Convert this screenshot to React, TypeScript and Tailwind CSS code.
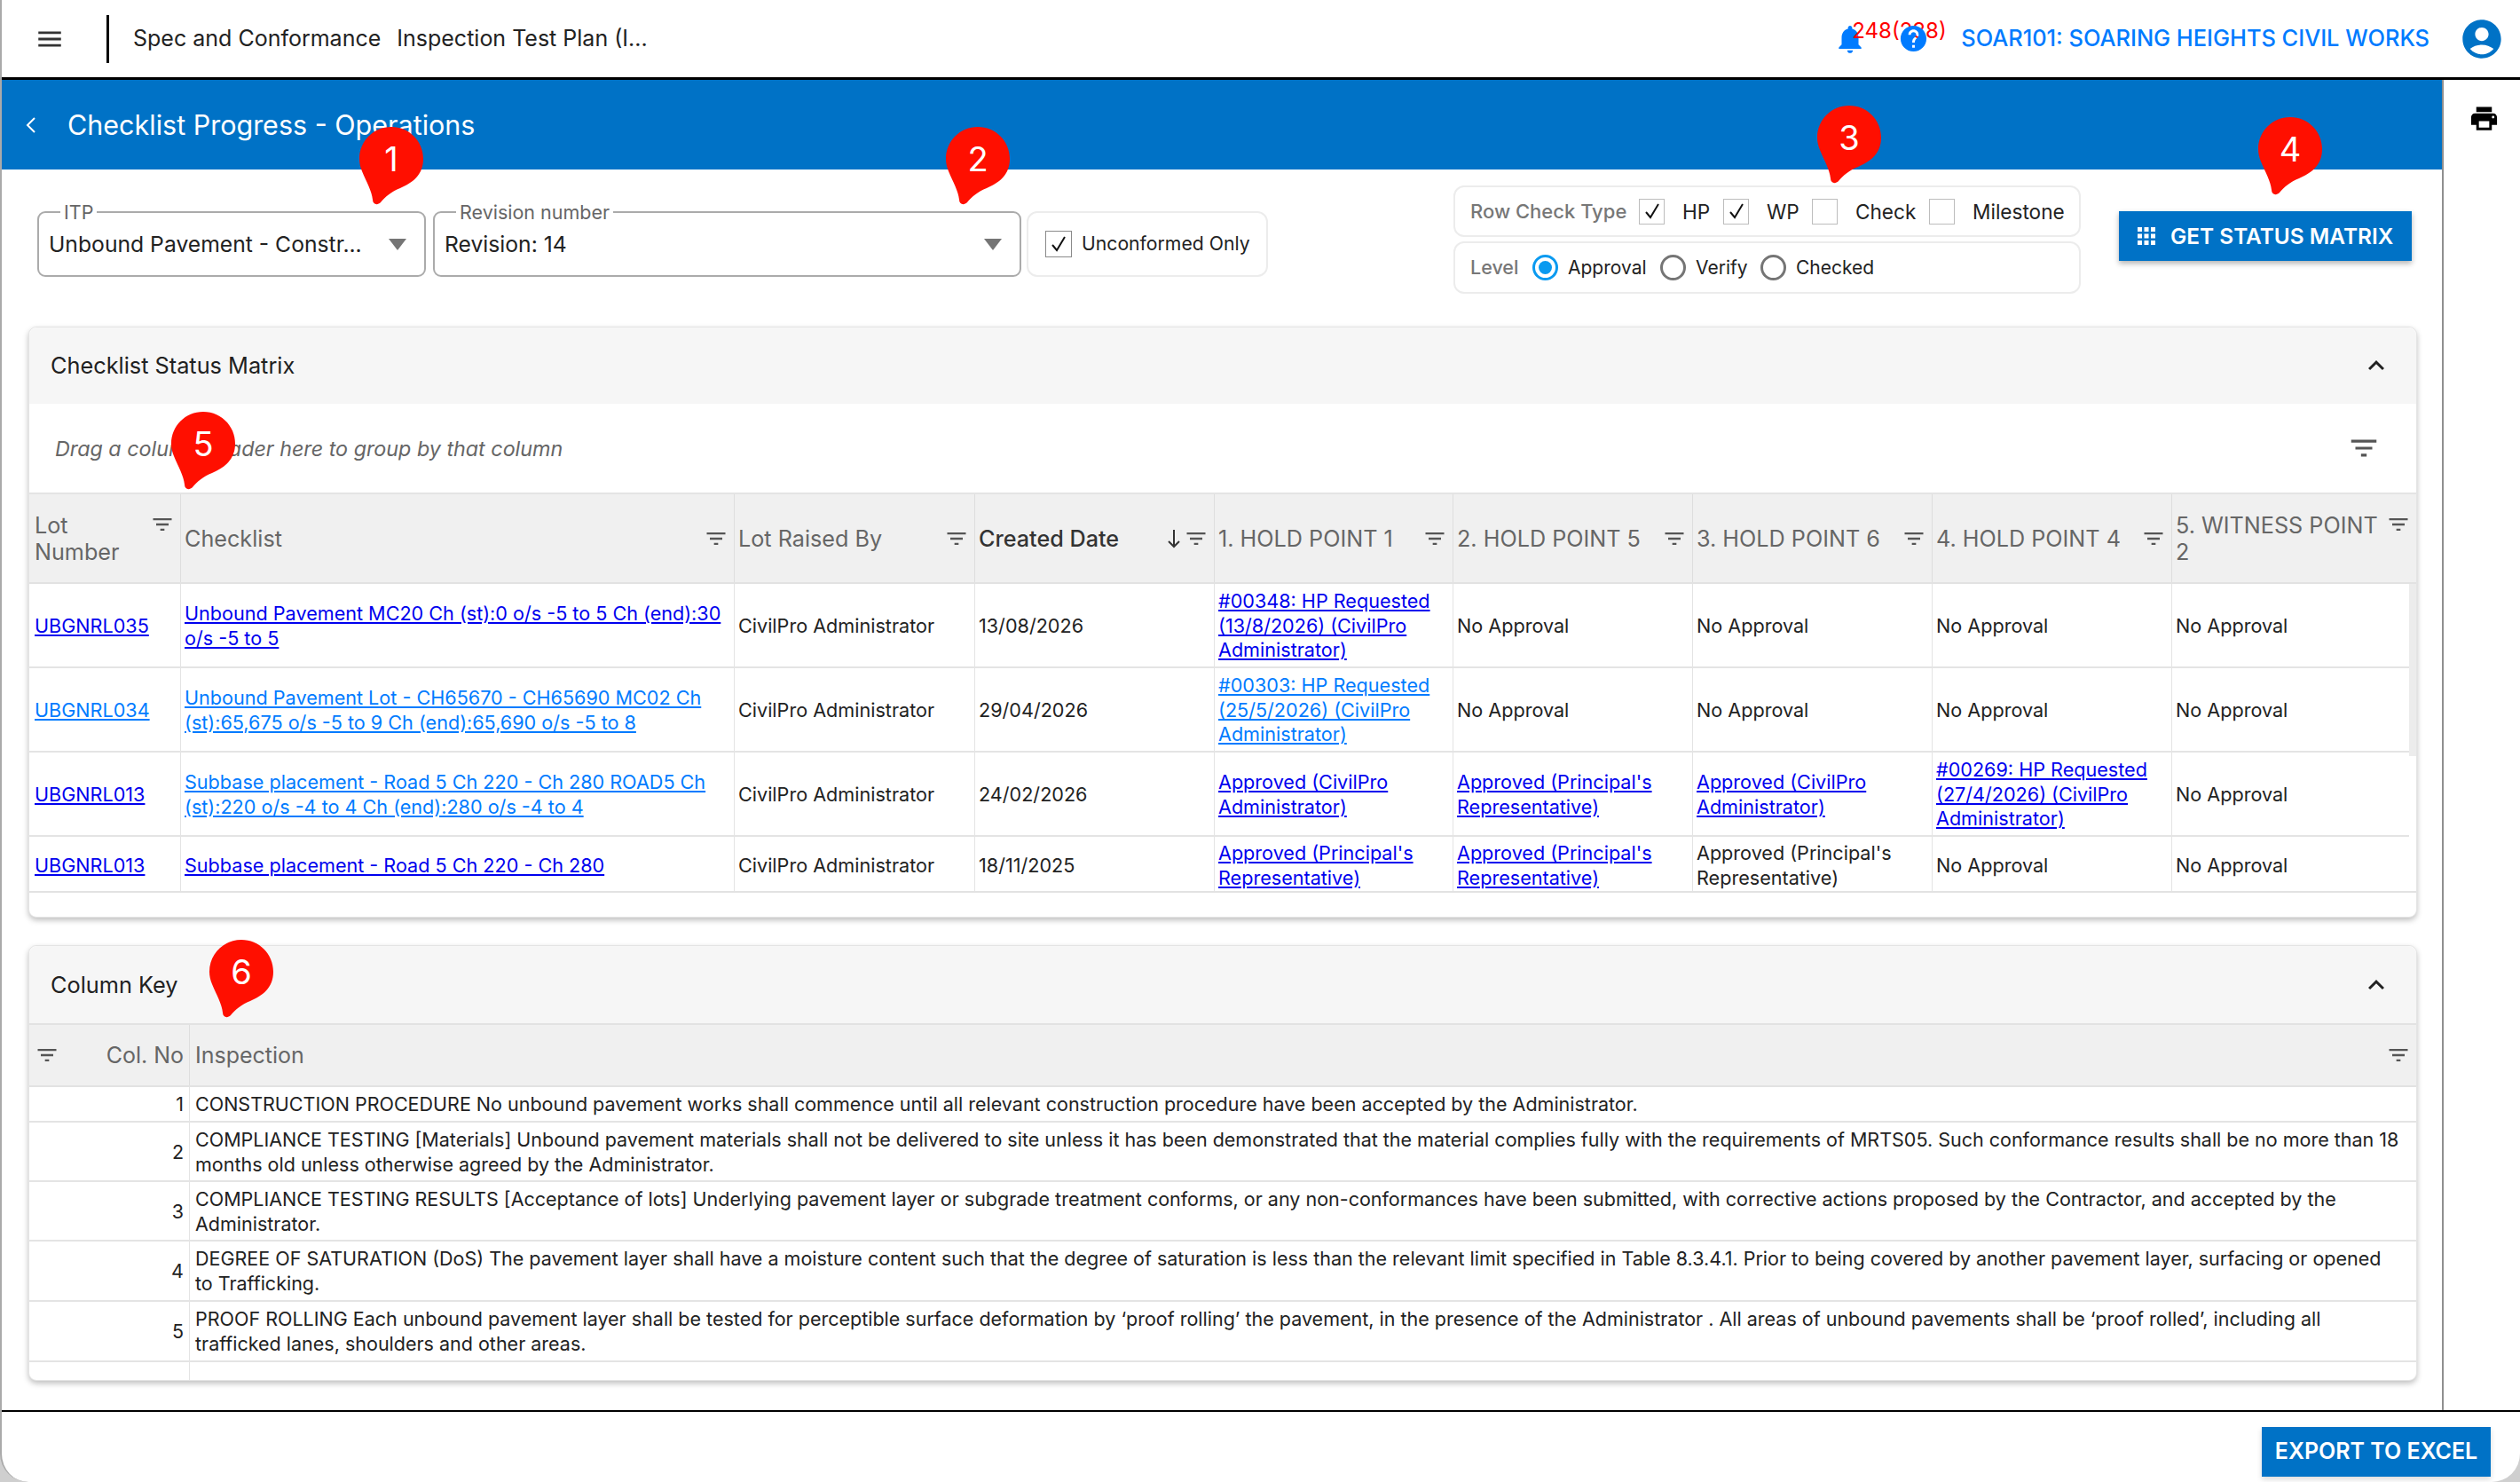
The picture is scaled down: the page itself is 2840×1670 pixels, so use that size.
import type { ReactNode } from "react";

const FILTER = "M10 18h4v-2h-4v2zM3 6v2h18V6H3zm3 7h12v-2H6v2z";

function Icon({ d, size, className }: { d: string; size: number; className?: string }) {
  return (
    <svg width={size} height={size} viewBox="0 0 24 24" fill="currentColor" className={className}>
      <path d={d} />
    </svg>
  );
}

function FilterIcon({ size = 28, className = "" }: { size?: number; className?: string }) {
  return <Icon d={FILTER} size={size} className={`shrink-0 text-[#555] ${className}`} />;
}

function Marker({ n, className }: { n: number; className: string }) {
  return (
    <div className={`absolute z-20 w-[72px] h-[88px] ${className}`}>
      <svg width="72" height="88" viewBox="0 0 72 88" className="absolute inset-0">
        <path
          d="M36 0C56 0 72 16 72 36C72 54 60 63 46 69C36 73 29 79 24 85C20 89 15 87 15 82C14 72 8 62 3 50C1 45 0 41 0 36C0 16 16 0 36 0Z"
          fill="#ff0f00"
        />
      </svg>
      <span className="absolute left-0 top-0 w-[72px] h-[72px] flex items-center justify-center text-white text-[38px]">{n}</span>
    </div>
  );
}

function Box({ checked }: { checked?: boolean }) {
  return (
    <span className="w-[29px] h-[29px] border border-[#bdbdbd] flex items-center justify-center shrink-0">
      {checked && (
        <svg width="20" height="20" viewBox="0 0 20 20" fill="none" stroke="#111" strokeWidth="2">
          <path d="M3 11l5 6L17 2" />
        </svg>
      )}
    </span>
  );
}

function Radio({ checked }: { checked?: boolean }) {
  return (
    <span
      className={`w-[29px] h-[29px] rounded-full border-[3px] flex items-center justify-center shrink-0 ${
        checked ? "border-[#0a9af0]" : "border-[#757575]"
      }`}
    >
      {checked && <span className="w-[15px] h-[15px] rounded-full bg-[#0a9af0]" />}
    </span>
  );
}

function SelectField({ label, value, width, labelLeft }: { label: string; value: string; width: string; labelLeft: string }) {
  return (
    <div className={`relative h-[74px] border-2 border-[#ababab] rounded-[9px] flex items-center pl-[11px] pr-[20px] ${width}`}>
      <span className={`absolute -top-[13px] bg-white px-[4px] text-[21.500px] leading-[24px] text-[#666] ${labelLeft}`}>{label}</span>
      <span className="flex-1 pt-[2px] text-[24.700px] text-[#222]">{value}</span>
      <span className="w-0 h-0 border-x-[10px] border-x-transparent border-t-[13px] border-t-[#757575]" />
    </div>
  );
}

function CardHeader({ title, height }: { title: string; height: string }) {
  return (
    <div className={`flex items-center justify-between bg-[#f6f6f6] pl-[24px] pr-[27px] rounded-t-[9px] ${height}`}>
      <span className="text-[25.300px] text-[#212121]">{title}</span>
      <Icon d="M12 8l-6 6 1.41 1.41L12 10.83l4.59 4.58L18 14z" size={36} className="text-[#222]" />
    </div>
  );
}

const cols = "grid grid-cols-[170px_624px_271px_270px_269px_270px_270px_270px_1fr]";

type Head = { label: ReactNode; top?: boolean; dark?: boolean; sort?: boolean };

const heads: Head[] = [
  { label: <>Lot<br />Number</>, top: true },
  { label: "Checklist" },
  { label: "Lot Raised By" },
  { label: "Created Date", dark: true, sort: true },
  { label: "1. HOLD POINT 1" },
  { label: "2. HOLD POINT 5" },
  { label: "3. HOLD POINT 6" },
  { label: "4. HOLD POINT 4" },
  { label: <>5. WITNESS POINT<br />2</>, top: true },
];

const dk = "text-[#0000ee]";
const lt = "text-[#007bff]";

type Cell = string | { link: string; color: string };
const L = (link: string, color = dk): Cell => ({ link, color });

const rows: { h: string; pad: string; cells: Cell[] }[] = [
  {
    h: "h-[95px]",
    pad: "pt-[2px]",
    cells: [
      L("UBGNRL035"),
      L("Unbound Pavement MC20 Ch (st):0 o/s -5 to 5 Ch (end):30 o/s -5 to 5"),
      "CivilPro Administrator",
      "13/08/2026",
      L("#00348: HP Requested (13/8/2026) (CivilPro Administrator)"),
      "No Approval",
      "No Approval",
      "No Approval",
      "No Approval",
    ],
  },
  {
    h: "h-[95px]",
    pad: "pt-[2px]",
    cells: [
      L("UBGNRL034", lt),
      L("Unbound Pavement Lot - CH65670 - CH65690 MC02 Ch (st):65,675 o/s -5 to 9 Ch (end):65,690 o/s -5 to 8", lt),
      "CivilPro Administrator",
      "29/04/2026",
      L("#00303: HP Requested (25/5/2026) (CivilPro Administrator)", lt),
      "No Approval",
      "No Approval",
      "No Approval",
      "No Approval",
    ],
  },
  {
    h: "h-[95px]",
    pad: "pt-[2px]",
    cells: [
      L("UBGNRL013"),
      L("Subbase placement - Road 5 Ch 220 - Ch 280 ROAD5 Ch (st):220 o/s -4 to 4 Ch (end):280 o/s -4 to 4", lt),
      "CivilPro Administrator",
      "24/02/2026",
      L("Approved (CivilPro Administrator)"),
      L("Approved (Principal's Representative)"),
      L("Approved (CivilPro Administrator)"),
      L("#00269: HP Requested (27/4/2026) (CivilPro Administrator)"),
      "No Approval",
    ],
  },
  {
    h: "h-[61px]",
    pad: "pt-[4px]",
    cells: [
      L("UBGNRL013"),
      L("Subbase placement - Road 5 Ch 220 - Ch 280"),
      "CivilPro Administrator",
      "18/11/2025",
      L("Approved (Principal's Representative)"),
      L("Approved (Principal's Representative)"),
      "Approved (Principal's Representative)",
      "No Approval",
      "No Approval",
    ],
  },
];

const keyRows: { h: string; text: ReactNode }[] = [
  { h: "h-[40px]", text: "CONSTRUCTION PROCEDURE No unbound pavement works shall commence until all relevant construction procedure have been accepted by the Administrator." },
  { h: "h-[67px]", text: "COMPLIANCE TESTING [Materials] Unbound pavement materials shall not be delivered to site unless it has been demonstrated that the material complies fully with the requirements of MRTS05. Such conformance results shall be no more than 18 months old unless otherwise agreed by the Administrator." },
  { h: "h-[67px]", text: "COMPLIANCE TESTING RESULTS [Acceptance of lots] Underlying pavement layer or subgrade treatment conforms, or any non-conformances have been submitted, with corrective actions proposed by the Contractor, and accepted by the Administrator." },
  { h: "h-[68px]", text: <>DEGREE OF SATURATION (DoS) The pavement layer shall have a moisture content such that the degree of saturation is less than the relevant limit specified in Table 8.3.4.1. Prior to being covered by another pavement layer, surfacing or opened<br />to Trafficking.</> },
  { h: "h-[68px]", text: "PROOF ROLLING Each unbound pavement layer shall be tested for perceptible surface deformation by ‘proof rolling’ the pavement, in the presence of the Administrator . All areas of unbound pavements shall be ‘proof rolled’, including all trafficked lanes, shoulders and other areas." },
];

export default function App() {
  return (
    <div className="relative w-[2840px] h-[1670px] bg-[#cfcfcf] font-['Inter',sans-serif] text-[#222]">
      <div className="w-full h-full bg-white rounded-b-[32px] border-l-2 border-[#aaaaaa] flex flex-col overflow-hidden">
        {/* top bar */}
        <header className="relative h-[90px] shrink-0 border-b-[3px] border-black flex items-center pl-[37px] pr-[17px]">
          <Icon d="M3 18h18v-2H3v2zm0-5h18v-2H3v2zm0-7v2h18V6H3z" size={34} className="text-[#333]" />
          <span className="ml-[47px] w-[3px] h-[54px] bg-black" />
          <span className="ml-[27px] text-[25px] text-[#222]">Spec and Conformance</span>
          <span className="ml-[18px] text-[25px] text-[#222]">Inspection Test Plan (I...</span>
          <div className="ml-auto flex items-center">
            <div className="relative flex items-center">
              <Icon
                d="M12 22c1.1 0 2-.9 2-2h-4c0 1.1.89 2 2 2zm6-6v-5c0-3.07-1.64-5.64-4.5-6.32V4c0-.83-.67-1.5-1.5-1.5s-1.5.67-1.5 1.5v.68C7.63 5.36 6 7.92 6 11v5l-2 2v1h16v-1l-2-2z"
                size={38}
                className="text-[#007bff]"
              />
              <span className="absolute left-[21px] -top-[5px] text-[24px] leading-[30px] text-[#ff0000]">248(238)</span>
              <Icon
                d="M12 2C6.48 2 2 6.48 2 12s4.48 10 10 10 10-4.48 10-10S17.52 2 12 2zm1 17h-2v-2h2v2zm2.07-7.75l-.9.92C13.45 12.9 13 13.5 13 15h-2v-.5c0-1.1.45-2.1 1.17-2.83l1.24-1.26c.37-.36.59-.86.59-1.41 0-1.1-.9-2-2-2s-2 .9-2 2H8c0-2.21 1.79-4 4-4s4 1.79 4 4c0 .88-.36 1.68-.93 2.25z"
                size={35}
                className="relative ml-[35px] text-[#007bff]"
              />
            </div>
            <span className="ml-[36px] text-[25.400px] font-medium text-[#007bff]">SOAR101: SOARING HEIGHTS CIVIL WORKS</span>
            <Icon
              d="M12 2C6.48 2 2 6.48 2 12s4.48 10 10 10 10-4.48 10-10S17.52 2 12 2zm0 4c1.93 0 3.5 1.57 3.5 3.5S13.93 13 12 13s-3.5-1.57-3.5-3.5S10.07 6 12 6zm0 14c-2.03 0-4.43-.82-6.14-2.88C7.55 15.8 9.68 15 12 15s4.45.8 6.14 2.12C16.43 19.18 14.03 20 12 20z"
              size={52}
              className="ml-[33px] text-[#0072c6]"
            />
          </div>
        </header>

        <div className="flex flex-1 min-h-0">
          <main className="w-[2750px] shrink-0">
            <div className="h-[101px] bg-[#0072c6] flex items-center pl-[26px]">
              <svg width="14" height="20" viewBox="0 0 14 20" fill="none" stroke="white" strokeWidth="2">
                <path d="M11 2L3 10l8 8" />
              </svg>
              <span className="ml-[34px] text-[30.500px] text-white">Checklist Progress - Operations</span>
            </div>

            {/* filters */}
            <div className="mt-[18px] h-[122px] flex items-start pl-[40px]">
              <div className="mt-[29px] flex items-start">
                <SelectField label="ITP" value="Unbound Pavement - Constr..." width="w-[438px]" labelLeft="left-[24px]" />
                <SelectField label="Revision number" value="Revision: 14" width="w-[663px] ml-[8px]" labelLeft="left-[24px]" />
                <div className="ml-[6px] w-[272px] h-[74px] border-2 border-[#ececec] rounded-[12px] flex items-center pl-[19px]">
                  <span className="w-[30px] h-[30px] border border-[#8a8a8a] flex items-center justify-center">
                    <svg width="20" height="20" viewBox="0 0 20 20" fill="none" stroke="#111" strokeWidth="2">
                      <path d="M3 11l5 6L17 2" />
                    </svg>
                  </span>
                  <span className="ml-[11px] text-[21.200px] text-[#222]">Unconformed Only</span>
                </div>
              </div>

              <div className="ml-[209px] w-[707px] flex flex-col gap-[5px]">
                <div className="h-[58px] border-2 border-[#ececec] rounded-[12px] flex items-center pl-[17px] text-[22.600px] text-[#222]">
                  <span className="w-[190px] text-[22px] font-medium text-[#777]">Row Check Type</span>
                  <Box checked />
                  <span className="ml-[20px] w-[46px] pt-[2px]">HP</span>
                  <Box checked />
                  <span className="ml-[20px] w-[51px] pt-[2px]">WP</span>
                  <Box />
                  <span className="ml-[20px] w-[83px] pt-[2px]">Check</span>
                  <Box />
                  <span className="ml-[20px] pt-[2px]">Milestone</span>
                </div>
                <div className="h-[59px] border-2 border-[#ececec] rounded-[12px] flex items-center pl-[17px] text-[21px] text-[#222]">
                  <span className="w-[70px] text-[21.500px] font-medium text-[#777]">Level</span>
                  <Radio checked />
                  <span className="ml-[11px] w-[104px]">Approval</span>
                  <Radio />
                  <span className="ml-[11px] w-[73px]">Verify</span>
                  <Radio />
                  <span className="ml-[11px]">Checked</span>
                </div>
              </div>

              <div className="ml-[43px] mt-[29px] w-[330px] h-[56px] bg-[#0072c6] shadow-[0_3px_6px_rgba(0,0,0,0.3)] flex items-center pl-[21px] text-white">
                <svg width="20" height="20" viewBox="0 0 20 20" fill="white">
                  <path d="M0 0h5v5H0zM7.5 0h5v5h-5zM15 0h5v5h-5zM0 7.500h5v5H0zM7.500 7.500h5v5h-5zM15 7.500h5v5h-5zM0 15h5v5H0zM7.500 15h5v5h-5zM15 15h5v5h-5z" />
                </svg>
                <span className="ml-[17px] text-[24.400px] font-semibold">GET STATUS MATRIX</span>
              </div>
            </div>

            {/* status matrix */}
            <section className="mt-[37px] ml-[30px] w-[2692px] h-[666px] bg-white border border-[#e4e4e4] rounded-[9px] shadow-[0_3px_6px_rgba(0,0,0,0.25)]">
              <CardHeader title="Checklist Status Matrix" height="h-[86px]" />
              <div className="h-[102px] flex items-center justify-between pl-[29px] pr-[40px] border-b-2 border-[#e4e4e4]">
                <span className="italic pt-[2px] text-[23.300px] text-[#666]">Drag a column header here to group by that column</span>
                <FilterIcon size={38} className="text-[#333]" />
              </div>
              <div className={`${cols} h-[101px] bg-[#f0f0f0] border-b-2 border-[#e2e2e2]`}>
                {heads.map((h, i) => (
                  <div key={i} className={`flex items-center pr-[6px] text-[25.200px] leading-[30px] ${i === 0 ? "pl-[6px]" : "pl-[4px] border-l border-[#dedede]"} ${h.dark ? "text-[#333] font-medium" : "text-[#666]"}`}>
                    <span className="flex-1">{h.label}</span>
                    {h.sort && (
                      <svg width="14" height="22" viewBox="0 0 14 22" fill="none" stroke="#333" strokeWidth="2" className="mr-[4px]">
                        <path d="M7 1v19M1 14l6 6 6-6" />
                      </svg>
                    )}
                    <FilterIcon className={h.top ? "self-start mt-[20px]" : ""} />
                  </div>
                ))}
              </div>
              <div className="relative pr-[8px] border-b-2 border-[#e2e2e2]">
                <div className="absolute right-0 top-0 w-[8px] h-[194px] bg-[#ececec]" />
                {rows.map((r, ri) => (
                  <div key={ri} className={`${cols} ${r.h} ${ri < rows.length - 1 ? "border-b-2 border-[#e4e4e4]" : ""}`}>
                    {r.cells.map((c, i) => (
                      <div key={i} className={`flex items-center pr-[6px] text-[21.600px] leading-[27.600px] ${r.pad} ${i === 0 ? "pl-[6px]" : "pl-[4px] border-l border-[#e4e4e4]"}`}>
                        {typeof c === "string" ? <span>{c}</span> : <a className={`underline ${c.color}`}>{c.link}</a>}
                      </div>
                    ))}
                  </div>
                ))}
              </div>
            </section>

            {/* column key */}
            <section className="mt-[31px] ml-[30px] w-[2692px] h-[491px] bg-white border border-[#e4e4e4] rounded-[9px] shadow-[0_3px_6px_rgba(0,0,0,0.25)] overflow-hidden">
              <CardHeader title="Column Key" height="h-[87px]" />
              <div className="grid grid-cols-[180px_1fr] h-[72px] bg-[#f0f0f0] border-y-2 border-[#e2e2e2] text-[25px] text-[#666]">
                <div className="flex items-center justify-between pl-[6px] pr-[6px]">
                  <FilterIcon />
                  <span className="pt-[2px]">Col. No</span>
                </div>
                <div className="flex items-center justify-between pl-[6px] pr-[6px] border-l border-[#dedede]">
                  <span className="pt-[2px]">Inspection</span>
                  <FilterIcon />
                </div>
              </div>
              {keyRows.map((r, i) => (
                <div key={i} className={`grid grid-cols-[180px_1fr] ${r.h} border-b-2 border-[#e4e4e4] text-[21.500px] leading-[28px]`}>
                  <div className="flex items-center justify-end pr-[6px]">{i + 1}</div>
                  <div className="flex items-center pl-[6px] pr-[6px] border-l border-[#e4e4e4]">
                    <span>{r.text}</span>
                  </div>
                </div>
              ))}
              <div className="grid grid-cols-[180px_1fr] h-[21px]">
                <div />
                <div className="border-l border-[#e4e4e4]" />
              </div>
            </section>
          </main>

          <aside className="flex-1 border-l-2 border-[#8f8f8f] flex justify-center pt-[26px] pl-[4px]">
            <Icon
              d="M19 8H5c-1.66 0-3 1.34-3 3v6h4v4h12v-4h4v-6c0-1.66-1.34-3-3-3zm-3 11H8v-5h8v5zm3-7c-.55 0-1-.45-1-1s.45-1 1-1 1 .45 1 1-.45 1-1 1zm-1-9H6v4h12V3z"
              size={35}
              className="text-black"
            />
          </aside>
        </div>

        <footer className="h-[81px] shrink-0 border-t-2 border-black flex justify-end items-start pt-[17px] pr-[33px]">
          <button className="w-[258px] h-[56px] bg-[#0072c6] text-white text-[25px] font-semibold shadow-[0_3px_6px_rgba(0,0,0,0.15)]">EXPORT TO EXCEL</button>
        </footer>
      </div>

      <Marker n={1} className="left-[405px] top-[143px]" />
      <Marker n={2} className="left-[1066px] top-[143px]" />
      <Marker n={3} className="left-[2048px] top-[119px]" />
      <Marker n={4} className="left-[2545px] top-[132px]" />
      <Marker n={5} className="left-[193px] top-[464px]" />
      <Marker n={6} className="left-[236px] top-[1059px]" />
    </div>
  );
}
